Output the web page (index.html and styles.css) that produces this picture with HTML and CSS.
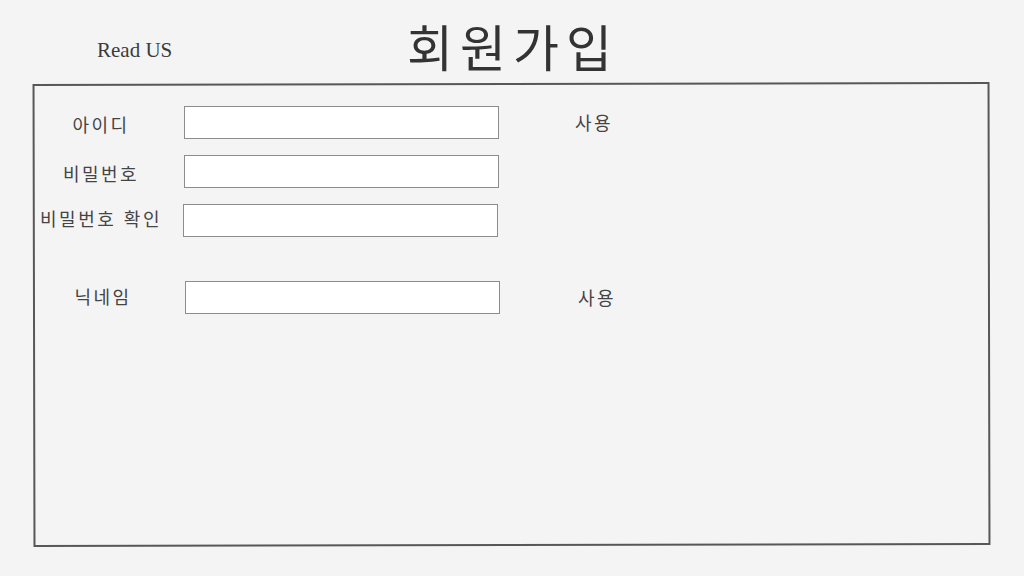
FILE: index.html
```html
<!DOCTYPE html>
<html lang="ko">
<head>
<meta charset="utf-8">
<link rel="stylesheet" href="styles.css">
</head>
<body>
<header class="top">
  <div class="brand">Read US</div>
  <h1 class="title">회원가입</h1>
</header>
<main class="panel">
  <div class="form">
    <div class="row">
      <label class="label">아이디</label>
      <input class="field" type="text">
      <span class="action">사용</span>
    </div>
    <div class="row">
      <label class="label">비밀번호</label>
      <input class="field" type="password">
    </div>
    <div class="row row-confirm">
      <label class="label">비밀번호 확인</label>
      <input class="field" type="password">
    </div>
    <div class="row row-nick">
      <label class="label">닉네임</label>
      <input class="field" type="text">
      <span class="action">사용</span>
    </div>
  </div>
</main>
</body>
</html>
```
FILE: styles.css
```css
html, body {
  margin: 0;
  padding: 0;
  background: #f4f4f4;
  width: 1024px;
  height: 576px;
  overflow: hidden;
}
body {
  font-family: "Noto Sans CJK KR", "Noto Sans", sans-serif;
  color: #3a3a3a;
}
.top {
  display: flex;
  align-items: center;
  height: 83px;
  padding-left: 97px;
  box-sizing: border-box;
}
.brand {
  font-family: "Liberation Serif", serif;
  font-size: 21px;
  color: #3c3c3c;
  width: 310px;
  margin-top: 18px;
}
.title {
  margin: 0;
  font-size: 50px;
  font-weight: 400;
  letter-spacing: 7px;
  color: #333;
  line-height: 1;
  margin-top: 6px;
}
.panel {
  position: relative;
  margin-left: 34px;
  width: 955px;
  height: 461px;
  margin-top: 1px;
}
.panel::before {
  content: "";
  position: absolute;
  inset: -1px -1px -1px -1px;
  border: 2px solid #575757;
  transform: rotate(-0.12deg);
  pointer-events: none;
}
.form {
  display: flex;
  flex-direction: column;
  gap: 16px;
  padding-top: 22px;
}
.row {
  display: grid;
  grid-template-columns: 134px 315px auto;
  column-gap: 16px;
  align-items: center;
}
.label {
  text-align: center;
  font-size: 18px;
  letter-spacing: 2.5px;
  color: #444;
  margin-top: 2px;
}
.field {
  box-sizing: border-box;
  width: 315px;
  height: 33px;
  margin: 0;
  border: 1px solid #8c8c8c;
  background: #fff;
  padding: 0 6px;
  outline: none;
}
.action {
  font-size: 18px;
  letter-spacing: 2.5px;
  color: #444;
  margin-left: 60px;
  margin-top: -1px;
}
.row-confirm .label {
  margin-top: -6px;
}
.row-confirm .field {
  margin-left: -1px;
}
.row-nick {
  margin-top: 28px;
}
.row-nick .field {
  margin-left: 1px;
}
.row-nick .label {
  margin-top: -3px;
  margin-left: 4px;
}
.row-nick .action {
  margin-left: 63px;
}
```
